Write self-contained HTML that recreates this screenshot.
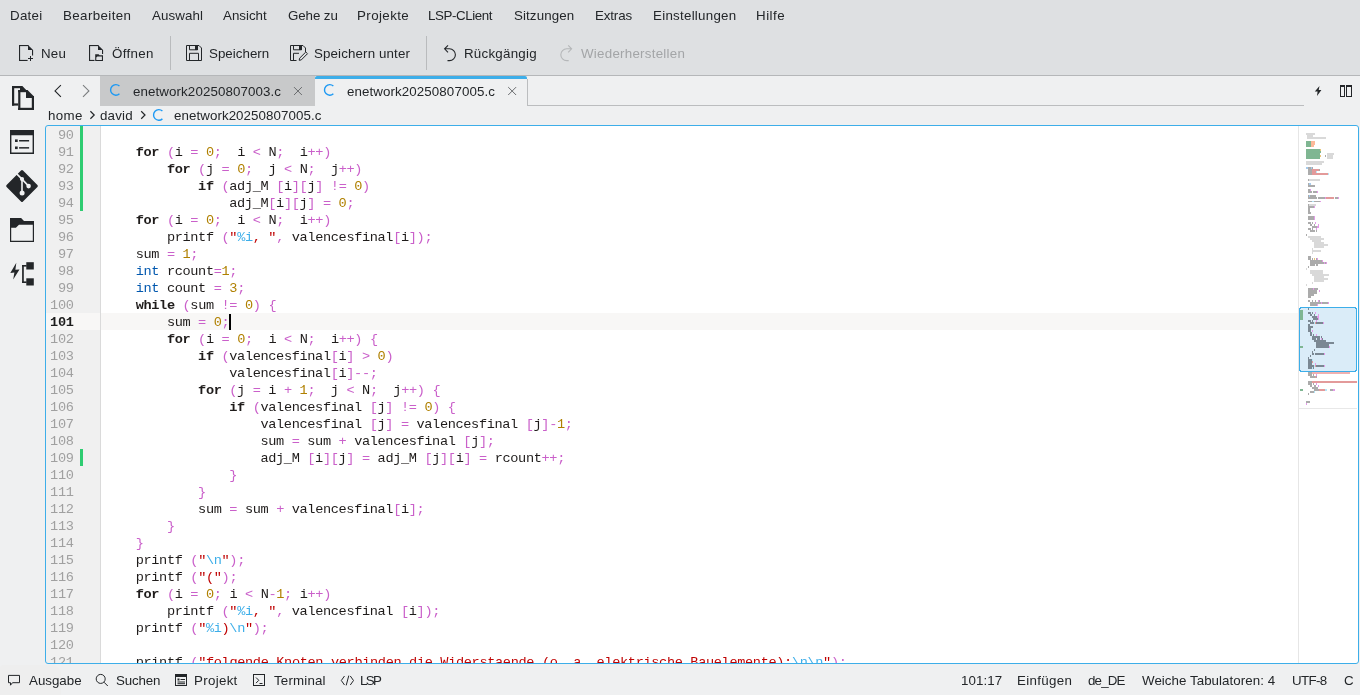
<!DOCTYPE html>
<html><head><meta charset="utf-8"><style>
html,body{margin:0;padding:0}
body{width:1360px;height:695px;overflow:hidden;position:relative;background:#eff0f1;font-family:"Liberation Sans", sans-serif}
.t{position:absolute;white-space:pre;line-height:20px;height:20px;will-change:transform}
.abs{position:absolute}
#hdr{position:absolute;left:0;top:0;width:1360px;height:75px;background:#dee0e2;border-bottom:1px solid #b5b7b9}
#codewrap{position:absolute;left:0;top:0;width:1298px;height:663px;overflow:hidden;will-change:transform}
.cl{position:absolute;left:104.5px;height:17px;line-height:17px;white-space:pre;font-family:"Liberation Mono", monospace;font-size:var(--cfs);letter-spacing:var(--cls);color:#1f1c1b}
.cl b{font-weight:bold}
.gl{position:absolute;left:45.5px;width:28px;text-align:right;height:17px;line-height:17px;font-family:"Liberation Mono", monospace;font-size:var(--cfs);letter-spacing:var(--cls);color:#a0a0a0}
.gl.cur{color:#1e1e1e;font-weight:bold}
:root{--cfs:13.6px;--cls:-0.36px}
</style></head><body>
<div id="hdr"></div>
<div class="abs" style="left:-4px;top:665px;width:65px;height:36px;background:#eeeeee;border-radius:9px"></div>
<div class="abs" style="left:100px;top:76px;width:215px;height:30px;background:#c8c9ca"></div>
<div class="abs" style="left:315px;top:76px;width:212px;height:3px;background:#3daee9;border-top-right-radius:2px;border-top-left-radius:2px"></div>
<div class="abs" style="left:527px;top:79px;width:1px;height:27px;background:#bbbdbf"></div>
<div class="abs" style="left:527px;top:105px;width:777px;height:1px;background:#bbbdbf"></div>
<svg class="abs" style="left:0;top:0" width="1360" height="695" viewBox="0 0 1360 695">
<g fill="#232629" stroke="none">
<!-- toolbar separators -->
<rect x="170" y="36" width="1" height="34" fill="#b9bbbd"/>
<rect x="426" y="36" width="1" height="34" fill="#b9bbbd"/>
<!-- Neu icon -->
<rect x="19" y="45" width="9.5" height="1.1"/>
<rect x="19" y="45" width="1.1" height="16"/>
<rect x="19" y="59.9" width="8.6" height="1.1"/>
<rect x="32" y="50" width="1.1" height="5.5"/>
<polygon points="28,45 33.1,50.1 28,50.1"/>
<rect x="28" y="58" width="5" height="1"/>
<rect x="30" y="56" width="1" height="5"/>
<!-- Öffnen icon -->
<rect x="89" y="45" width="9.5" height="1.1"/>
<rect x="89" y="45" width="1.1" height="16"/>
<rect x="89" y="59.9" width="5.5" height="1.1"/>
<rect x="102" y="50" width="1.1" height="4"/>
<polygon points="98,45 103.1,50.1 98,50.1"/>
<path d="M95.2,54.2 H98.6 L99.6,55.2 H103 V61 H95.2 Z M96.3,57.6 L97.4,56.5 H101.9 V59.9 H96.3 Z" fill-rule="evenodd"/>
<!-- Speichern -->
</g>
<g fill="none" stroke="#232629" stroke-width="1">
<path d="M186.5,45.5 H199 L201.5,48 V60.5 H186.5 Z M189.5,45.5 V49.8 H197.5 V45.5 M189.5,60.5 V53.3 H198.5 V60.5"/>
<path d="M290.5,45.5 H303 L305.5,48 V52 M296.5,60.5 H290.5 V45.5 M293.5,45.5 V49.8 H301.5 V45.5 M293.5,60.5 V53.3 H299"/>
<path d="M299.2,60.3 L299.6,58.2 L305.8,52 L307.5,53.7 L301.3,59.9 Z"/>
</g>
<g fill="#232629">
<rect x="195" y="45.5" width="3" height="4.5"/>
<rect x="299" y="45.5" width="3" height="4.5"/>
</g>
<g fill="none" stroke-linecap="butt">
<!-- undo -->
<path d="M448,45.3 L444.6,48.8 L448,52.3 M444.8,48.8 H449.5 A5.9,5.9 0 0 1 449.5,60.6 H447.5" stroke="#232629" stroke-width="1.1"/>
<!-- redo -->
<path d="M568.2,45.3 L571.6,48.8 L568.2,52.3 M571.4,48.8 H566.7 A5.9,5.9 0 0 0 566.7,60.6 H568.7" stroke="#b5b7b9" stroke-width="1.1"/>
<!-- nav chevrons -->
<path d="M60.9,85.1 L55,90.9 L60.9,96.8" stroke="#232629" stroke-width="1.1"/>
<path d="M83,85.1 L88.9,90.9 L83,96.8" stroke="#7b7d7f" stroke-width="1.1"/>
<!-- C icons -->
<path d="M119.45,85.96 A5.3,5.3 0 1 0 119.45,93.84" stroke="#1d99f3" stroke-width="1.4"/>
<path d="M333.35,85.96 A5.3,5.3 0 1 0 333.35,93.84" stroke="#1d99f3" stroke-width="1.4"/>
<path d="M162.40,111.01 A5.3,5.3 0 1 0 162.40,118.89" stroke="#1d99f3" stroke-width="1.4"/>
<!-- close x -->
<path d="M294,87.1 L301.9,95 M301.9,87.1 L294,95" stroke="#6b6d6f" stroke-width="1"/>
<path d="M508.2,87.1 L516.1,95 M516.1,87.1 L508.2,95" stroke="#6b6d6f" stroke-width="1"/>
<!-- breadcrumb chevrons -->
<path d="M90.4,111.3 L94.2,115 L90.4,118.7" stroke="#232629" stroke-width="1.2"/>
<path d="M141.2,111.3 L145,115 L141.2,118.7" stroke="#232629" stroke-width="1.2"/>
</g>
<g fill="#232629">
<!-- bolt -->
<polygon points="1319.5,86 1314.8,91.6 1317.6,91.6 1317,96 1321.4,90 1318.7,90"/>
<!-- split -->
<path d="M1340,85 H1345 V97 H1340 Z M1341,87 V96 H1344 V87 Z M1346,85 H1352 V97 H1346 Z M1347,87 V96 H1351 V87 Z" fill-rule="evenodd"/>
<!-- sidebar: documents -->
<rect x="12" y="86" width="2.2" height="19.6"/>
<rect x="12" y="86" width="10.3" height="2.2"/>
<rect x="12" y="103.4" width="6.2" height="2.2"/>
<polygon points="20,88.2 22.3,86 26,89.7 26,90 20,90"/>
<rect x="18.2" y="90" width="2.2" height="20"/>
<rect x="18.2" y="90" width="9.3" height="2.2"/>
<rect x="18.2" y="107.8" width="15.8" height="2.2"/>
<rect x="31.8" y="96" width="2.2" height="14"/>
<polygon points="26,90 27.5,90 34,96.5 34,97.9 26,97.9"/>
<!-- sidebar: list window -->
<path d="M10,130 H34 V154 H10 Z M11.4,135.3 V152.6 H32.6 V135.3 Z" fill-rule="evenodd"/>
<rect x="15" y="139.4" width="2.7" height="2.6"/>
<rect x="15" y="146.5" width="2.7" height="2.6"/>
<rect x="19.1" y="140" width="10" height="1.5"/>
<rect x="19.1" y="147.1" width="10" height="1.5"/>
<!-- git -->
<path d="M21,170.6 Q22,169.6 23,170.6 L37.4,185 Q38.4,186 37.4,187 L23,201.4 Q22,202.4 21,201.4 L6.6,187 Q5.6,186 6.6,185 Z"/>
<path d="M15.5,172.6 L22,179.1 V192.9 M22,179.1 L28.6,186.1" stroke="#eff0f1" stroke-width="1.6" fill="none"/>
<circle cx="22" cy="179.1" r="2.1" fill="#eff0f1"/>
<circle cx="28.6" cy="186.1" r="2.3" fill="#eff0f1"/>
<circle cx="22.1" cy="192.9" r="2.5" fill="#eff0f1"/>
<!-- folder -->
<path d="M10,218 H21.1 L24,221 H34 V242 H10 Z M11.2,227.8 V240.8 H32.8 V224.7 H19 L15.9,227.8 Z" fill-rule="evenodd"/>
<!-- lsp sidebar -->
<polygon points="16.3,262.8 10.3,272.9 14.4,272.6 13.2,279.6 19.5,269.4 15.4,269.7"/>
<rect x="22.1" y="265" width="1.7" height="18"/>
<rect x="22.1" y="265" width="4.5" height="1.6"/>
<rect x="22.1" y="281.4" width="4.5" height="1.6"/>
<rect x="26.3" y="262.2" width="7.5" height="7.3"/>
<rect x="26.3" y="278.3" width="7.5" height="7.2"/>
<!-- status: projekt -->
<path d="M175,674 H187 V686 H175 Z M176,677 V685 H186 V677 Z" fill-rule="evenodd"/>
<rect x="177.5" y="678.5" width="2" height="2"/>
<rect x="180.5" y="679" width="4.5" height="1"/>
<rect x="177.5" y="681.5" width="7.5" height="1"/>
<rect x="177.5" y="683.2" width="7.5" height="1"/>
</g>
<g fill="none" stroke="#232629" stroke-width="1">
<!-- speech bubble -->
<path d="M8.5,675.4 H19.5 V682.7 H12.5 L10.5,685.2 V682.7 H8.5 Z"/>
<!-- search -->
<circle cx="100.7" cy="678.9" r="4.5"/>
<path d="M104,682.2 L107.8,686"/>
<!-- terminal -->
<rect x="253.5" y="674.5" width="11" height="11"/>
<path d="M256,677.5 L258.8,680.3 L256,683.1 M259.5,683.5 H262.5"/>
<!-- lsp </> -->
<path d="M344.5,676 L341.3,680.5 L344.5,685 M348.8,675.6 L346.2,685.4 M350.3,676 L353.5,680.5 L350.3,685"/>
</g>
</svg>

<div class="abs" style="left:46px;top:126px;width:1312px;height:537px;background:#fff"></div>
<div class="abs" style="left:46px;top:126px;width:54px;height:537px;background:#f0f0f0"></div>
<div class="abs" style="left:100px;top:126px;width:1px;height:537px;background:#dadada"></div>
<div class="abs" style="left:101px;top:313px;width:1197px;height:17px;background:#f8f7f6"></div>
<div class="abs" style="left:46px;top:313px;width:54px;height:17px;background:#f8f7f6"></div>
<div class="abs" style="left:80px;top:126px;width:3px;height:85px;background:#2ecc71"></div>
<div class="abs" style="left:80px;top:449px;width:3px;height:17px;background:#2ecc71"></div>
<div class="abs" style="left:1298px;top:126px;width:1px;height:537px;background:#e6e6e6"></div>
<div id="codewrap">
<div class="gl" style="top:127px">90</div><div class="gl" style="top:144px">91</div><div class="gl" style="top:161px">92</div><div class="gl" style="top:178px">93</div><div class="gl" style="top:195px">94</div><div class="gl" style="top:212px">95</div><div class="gl" style="top:229px">96</div><div class="gl" style="top:246px">97</div><div class="gl" style="top:263px">98</div><div class="gl" style="top:280px">99</div><div class="gl" style="top:297px">100</div><div class="gl cur" style="top:314px">101</div><div class="gl" style="top:331px">102</div><div class="gl" style="top:348px">103</div><div class="gl" style="top:365px">104</div><div class="gl" style="top:382px">105</div><div class="gl" style="top:399px">106</div><div class="gl" style="top:416px">107</div><div class="gl" style="top:433px">108</div><div class="gl" style="top:450px">109</div><div class="gl" style="top:467px">110</div><div class="gl" style="top:484px">111</div><div class="gl" style="top:501px">112</div><div class="gl" style="top:518px">113</div><div class="gl" style="top:535px">114</div><div class="gl" style="top:552px">115</div><div class="gl" style="top:569px">116</div><div class="gl" style="top:586px">117</div><div class="gl" style="top:603px">118</div><div class="gl" style="top:620px">119</div><div class="gl" style="top:637px">120</div><div class="gl" style="top:654px">121</div>
<div class="cl" style="top:127px"></div><div class="cl" style="top:144px">    <b>for</b> <span style="color:#ca60ca">(</span><span style="color:#1f1c1b">i</span> <span style="color:#ca60ca">=</span> <span style="color:#b08000">0</span><span style="color:#ca60ca">;</span>  <span style="color:#1f1c1b">i</span> <span style="color:#ca60ca">&lt;</span> <span style="color:#1f1c1b">N</span><span style="color:#ca60ca">;</span>  <span style="color:#1f1c1b">i</span><span style="color:#ca60ca">+</span><span style="color:#ca60ca">+</span><span style="color:#ca60ca">)</span></div><div class="cl" style="top:161px">        <b>for</b> <span style="color:#ca60ca">(</span><span style="color:#1f1c1b">j</span> <span style="color:#ca60ca">=</span> <span style="color:#b08000">0</span><span style="color:#ca60ca">;</span>  <span style="color:#1f1c1b">j</span> <span style="color:#ca60ca">&lt;</span> <span style="color:#1f1c1b">N</span><span style="color:#ca60ca">;</span>  <span style="color:#1f1c1b">j</span><span style="color:#ca60ca">+</span><span style="color:#ca60ca">+</span><span style="color:#ca60ca">)</span></div><div class="cl" style="top:178px">            <b>if</b> <span style="color:#ca60ca">(</span><span style="color:#1f1c1b">adj_M</span> <span style="color:#ca60ca">[</span><span style="color:#1f1c1b">i</span><span style="color:#ca60ca">]</span><span style="color:#ca60ca">[</span><span style="color:#1f1c1b">j</span><span style="color:#ca60ca">]</span> <span style="color:#ca60ca">!</span><span style="color:#ca60ca">=</span> <span style="color:#b08000">0</span><span style="color:#ca60ca">)</span></div><div class="cl" style="top:195px">                <span style="color:#1f1c1b">adj_M</span><span style="color:#ca60ca">[</span><span style="color:#1f1c1b">i</span><span style="color:#ca60ca">]</span><span style="color:#ca60ca">[</span><span style="color:#1f1c1b">j</span><span style="color:#ca60ca">]</span> <span style="color:#ca60ca">=</span> <span style="color:#b08000">0</span><span style="color:#ca60ca">;</span></div><div class="cl" style="top:212px">    <b>for</b> <span style="color:#ca60ca">(</span><span style="color:#1f1c1b">i</span> <span style="color:#ca60ca">=</span> <span style="color:#b08000">0</span><span style="color:#ca60ca">;</span>  <span style="color:#1f1c1b">i</span> <span style="color:#ca60ca">&lt;</span> <span style="color:#1f1c1b">N</span><span style="color:#ca60ca">;</span>  <span style="color:#1f1c1b">i</span><span style="color:#ca60ca">+</span><span style="color:#ca60ca">+</span><span style="color:#ca60ca">)</span></div><div class="cl" style="top:229px">        <span style="color:#1f1c1b">printf</span> <span style="color:#ca60ca">(</span><span style="color:#bf0303">&quot;</span><span style="color:#3daee9">%i</span><span style="color:#bf0303">,</span><span style="color:#bf0303"> </span><span style="color:#bf0303">&quot;</span><span style="color:#ca60ca">,</span> <span style="color:#1f1c1b">valencesfinal</span><span style="color:#ca60ca">[</span><span style="color:#1f1c1b">i</span><span style="color:#ca60ca">]</span><span style="color:#ca60ca">)</span><span style="color:#ca60ca">;</span></div><div class="cl" style="top:246px">    <span style="color:#1f1c1b">sum</span> <span style="color:#ca60ca">=</span> <span style="color:#b08000">1</span><span style="color:#ca60ca">;</span></div><div class="cl" style="top:263px">    <span style="color:#0057ae">int</span> <span style="color:#1f1c1b">rcount</span><span style="color:#ca60ca">=</span><span style="color:#b08000">1</span><span style="color:#ca60ca">;</span></div><div class="cl" style="top:280px">    <span style="color:#0057ae">int</span> <span style="color:#1f1c1b">count</span> <span style="color:#ca60ca">=</span> <span style="color:#b08000">3</span><span style="color:#ca60ca">;</span></div><div class="cl" style="top:297px">    <b>while</b> <span style="color:#ca60ca">(</span><span style="color:#1f1c1b">sum</span> <span style="color:#ca60ca">!</span><span style="color:#ca60ca">=</span> <span style="color:#b08000">0</span><span style="color:#ca60ca">)</span> <span style="color:#ca60ca">{</span></div><div class="cl cur" style="top:314px">        <span style="color:#1f1c1b">sum</span> <span style="color:#ca60ca">=</span> <span style="color:#b08000">0</span><span style="color:#ca60ca">;</span></div><div class="cl" style="top:331px">        <b>for</b> <span style="color:#ca60ca">(</span><span style="color:#1f1c1b">i</span> <span style="color:#ca60ca">=</span> <span style="color:#b08000">0</span><span style="color:#ca60ca">;</span>  <span style="color:#1f1c1b">i</span> <span style="color:#ca60ca">&lt;</span> <span style="color:#1f1c1b">N</span><span style="color:#ca60ca">;</span>  <span style="color:#1f1c1b">i</span><span style="color:#ca60ca">+</span><span style="color:#ca60ca">+</span><span style="color:#ca60ca">)</span> <span style="color:#ca60ca">{</span></div><div class="cl" style="top:348px">            <b>if</b> <span style="color:#ca60ca">(</span><span style="color:#1f1c1b">valencesfinal</span><span style="color:#ca60ca">[</span><span style="color:#1f1c1b">i</span><span style="color:#ca60ca">]</span> <span style="color:#ca60ca">&gt;</span> <span style="color:#b08000">0</span><span style="color:#ca60ca">)</span></div><div class="cl" style="top:365px">                <span style="color:#1f1c1b">valencesfinal</span><span style="color:#ca60ca">[</span><span style="color:#1f1c1b">i</span><span style="color:#ca60ca">]</span><span style="color:#ca60ca">-</span><span style="color:#ca60ca">-</span><span style="color:#ca60ca">;</span></div><div class="cl" style="top:382px">            <b>for</b> <span style="color:#ca60ca">(</span><span style="color:#1f1c1b">j</span> <span style="color:#ca60ca">=</span> <span style="color:#1f1c1b">i</span> <span style="color:#ca60ca">+</span> <span style="color:#b08000">1</span><span style="color:#ca60ca">;</span>  <span style="color:#1f1c1b">j</span> <span style="color:#ca60ca">&lt;</span> <span style="color:#1f1c1b">N</span><span style="color:#ca60ca">;</span>  <span style="color:#1f1c1b">j</span><span style="color:#ca60ca">+</span><span style="color:#ca60ca">+</span><span style="color:#ca60ca">)</span> <span style="color:#ca60ca">{</span></div><div class="cl" style="top:399px">                <b>if</b> <span style="color:#ca60ca">(</span><span style="color:#1f1c1b">valencesfinal</span> <span style="color:#ca60ca">[</span><span style="color:#1f1c1b">j</span><span style="color:#ca60ca">]</span> <span style="color:#ca60ca">!</span><span style="color:#ca60ca">=</span> <span style="color:#b08000">0</span><span style="color:#ca60ca">)</span> <span style="color:#ca60ca">{</span></div><div class="cl" style="top:416px">                    <span style="color:#1f1c1b">valencesfinal</span> <span style="color:#ca60ca">[</span><span style="color:#1f1c1b">j</span><span style="color:#ca60ca">]</span> <span style="color:#ca60ca">=</span> <span style="color:#1f1c1b">valencesfinal</span> <span style="color:#ca60ca">[</span><span style="color:#1f1c1b">j</span><span style="color:#ca60ca">]</span><span style="color:#ca60ca">-</span><span style="color:#b08000">1</span><span style="color:#ca60ca">;</span></div><div class="cl" style="top:433px">                    <span style="color:#1f1c1b">sum</span> <span style="color:#ca60ca">=</span> <span style="color:#1f1c1b">sum</span> <span style="color:#ca60ca">+</span> <span style="color:#1f1c1b">valencesfinal</span> <span style="color:#ca60ca">[</span><span style="color:#1f1c1b">j</span><span style="color:#ca60ca">]</span><span style="color:#ca60ca">;</span></div><div class="cl" style="top:450px">                    <span style="color:#1f1c1b">adj_M</span> <span style="color:#ca60ca">[</span><span style="color:#1f1c1b">i</span><span style="color:#ca60ca">]</span><span style="color:#ca60ca">[</span><span style="color:#1f1c1b">j</span><span style="color:#ca60ca">]</span> <span style="color:#ca60ca">=</span> <span style="color:#1f1c1b">adj_M</span> <span style="color:#ca60ca">[</span><span style="color:#1f1c1b">j</span><span style="color:#ca60ca">]</span><span style="color:#ca60ca">[</span><span style="color:#1f1c1b">i</span><span style="color:#ca60ca">]</span> <span style="color:#ca60ca">=</span> <span style="color:#1f1c1b">rcount</span><span style="color:#ca60ca">+</span><span style="color:#ca60ca">+</span><span style="color:#ca60ca">;</span></div><div class="cl" style="top:467px">                <span style="color:#ca60ca">}</span></div><div class="cl" style="top:484px">            <span style="color:#ca60ca">}</span></div><div class="cl" style="top:501px">            <span style="color:#1f1c1b">sum</span> <span style="color:#ca60ca">=</span> <span style="color:#1f1c1b">sum</span> <span style="color:#ca60ca">+</span> <span style="color:#1f1c1b">valencesfinal</span><span style="color:#ca60ca">[</span><span style="color:#1f1c1b">i</span><span style="color:#ca60ca">]</span><span style="color:#ca60ca">;</span></div><div class="cl" style="top:518px">        <span style="color:#ca60ca">}</span></div><div class="cl" style="top:535px">    <span style="color:#ca60ca">}</span></div><div class="cl" style="top:552px">    <span style="color:#1f1c1b">printf</span> <span style="color:#ca60ca">(</span><span style="color:#bf0303">&quot;</span><span style="color:#3daee9">\n</span><span style="color:#bf0303">&quot;</span><span style="color:#ca60ca">)</span><span style="color:#ca60ca">;</span></div><div class="cl" style="top:569px">    <span style="color:#1f1c1b">printf</span> <span style="color:#ca60ca">(</span><span style="color:#bf0303">&quot;</span><span style="color:#bf0303">(</span><span style="color:#bf0303">&quot;</span><span style="color:#ca60ca">)</span><span style="color:#ca60ca">;</span></div><div class="cl" style="top:586px">    <b>for</b> <span style="color:#ca60ca">(</span><span style="color:#1f1c1b">i</span> <span style="color:#ca60ca">=</span> <span style="color:#b08000">0</span><span style="color:#ca60ca">;</span> <span style="color:#1f1c1b">i</span> <span style="color:#ca60ca">&lt;</span> <span style="color:#1f1c1b">N</span><span style="color:#ca60ca">-</span><span style="color:#b08000">1</span><span style="color:#ca60ca">;</span> <span style="color:#1f1c1b">i</span><span style="color:#ca60ca">+</span><span style="color:#ca60ca">+</span><span style="color:#ca60ca">)</span></div><div class="cl" style="top:603px">        <span style="color:#1f1c1b">printf</span> <span style="color:#ca60ca">(</span><span style="color:#bf0303">&quot;</span><span style="color:#3daee9">%i</span><span style="color:#bf0303">,</span><span style="color:#bf0303"> </span><span style="color:#bf0303">&quot;</span><span style="color:#ca60ca">,</span> <span style="color:#1f1c1b">valencesfinal</span> <span style="color:#ca60ca">[</span><span style="color:#1f1c1b">i</span><span style="color:#ca60ca">]</span><span style="color:#ca60ca">)</span><span style="color:#ca60ca">;</span></div><div class="cl" style="top:620px">    <span style="color:#1f1c1b">printf</span> <span style="color:#ca60ca">(</span><span style="color:#bf0303">&quot;</span><span style="color:#3daee9">%i</span><span style="color:#bf0303">)</span><span style="color:#3daee9">\n</span><span style="color:#bf0303">&quot;</span><span style="color:#ca60ca">)</span><span style="color:#ca60ca">;</span></div><div class="cl" style="top:637px"></div><div class="cl" style="top:654px">    <span style="color:#1f1c1b">printf</span> <span style="color:#ca60ca">(</span><span style="color:#bf0303">&quot;</span><span style="color:#bf0303">f</span><span style="color:#bf0303">o</span><span style="color:#bf0303">l</span><span style="color:#bf0303">g</span><span style="color:#bf0303">e</span><span style="color:#bf0303">n</span><span style="color:#bf0303">d</span><span style="color:#bf0303">e</span><span style="color:#bf0303"> </span><span style="color:#bf0303">K</span><span style="color:#bf0303">n</span><span style="color:#bf0303">o</span><span style="color:#bf0303">t</span><span style="color:#bf0303">e</span><span style="color:#bf0303">n</span><span style="color:#bf0303"> </span><span style="color:#bf0303">v</span><span style="color:#bf0303">e</span><span style="color:#bf0303">r</span><span style="color:#bf0303">b</span><span style="color:#bf0303">i</span><span style="color:#bf0303">n</span><span style="color:#bf0303">d</span><span style="color:#bf0303">e</span><span style="color:#bf0303">n</span><span style="color:#bf0303"> </span><span style="color:#bf0303">d</span><span style="color:#bf0303">i</span><span style="color:#bf0303">e</span><span style="color:#bf0303"> </span><span style="color:#bf0303">W</span><span style="color:#bf0303">i</span><span style="color:#bf0303">d</span><span style="color:#bf0303">e</span><span style="color:#bf0303">r</span><span style="color:#bf0303">s</span><span style="color:#bf0303">t</span><span style="color:#bf0303">a</span><span style="color:#bf0303">e</span><span style="color:#bf0303">n</span><span style="color:#bf0303">d</span><span style="color:#bf0303">e</span><span style="color:#bf0303"> </span><span style="color:#bf0303">(</span><span style="color:#bf0303">o</span><span style="color:#bf0303">.</span><span style="color:#bf0303"> </span><span style="color:#bf0303">a</span><span style="color:#bf0303">.</span><span style="color:#bf0303"> </span><span style="color:#bf0303">e</span><span style="color:#bf0303">l</span><span style="color:#bf0303">e</span><span style="color:#bf0303">k</span><span style="color:#bf0303">t</span><span style="color:#bf0303">r</span><span style="color:#bf0303">i</span><span style="color:#bf0303">s</span><span style="color:#bf0303">c</span><span style="color:#bf0303">h</span><span style="color:#bf0303">e</span><span style="color:#bf0303"> </span><span style="color:#bf0303">B</span><span style="color:#bf0303">a</span><span style="color:#bf0303">u</span><span style="color:#bf0303">e</span><span style="color:#bf0303">l</span><span style="color:#bf0303">e</span><span style="color:#bf0303">m</span><span style="color:#bf0303">e</span><span style="color:#bf0303">n</span><span style="color:#bf0303">t</span><span style="color:#bf0303">e</span><span style="color:#bf0303">)</span><span style="color:#bf0303">:</span><span style="color:#3daee9">\n</span><span style="color:#3daee9">\n</span><span style="color:#bf0303">&quot;</span><span style="color:#ca60ca">)</span><span style="color:#ca60ca">;</span></div>
</div>
<div class="abs" style="left:229px;top:314px;width:2px;height:16px;background:#000"></div>
<div class="abs" style="left:1299px;top:408px;width:58px;height:1px;background:#e8e8e8"></div>
<svg class="abs" style="left:0;top:0" width="1360" height="695" shape-rendering="crispEdges">
<rect x="1306" y="133" width="9" height="2" fill="#d9d9d9"/>
<rect x="1307" y="135" width="6" height="2" fill="#d9d9d9"/>
<rect x="1307" y="137" width="19" height="2" fill="#d9d9d9"/>
<rect x="1306" y="141" width="5" height="6" fill="#7fb692"/>
<rect x="1311" y="141" width="4" height="4" fill="#fdb99a"/>
<rect x="1311" y="145" width="3" height="2" fill="#fdb99a"/>
<rect x="1306" y="149" width="14" height="10" fill="#7fb692"/>
<rect x="1320" y="149" width="1" height="2" fill="#e8c478"/>
<rect x="1320" y="151" width="1" height="2" fill="#7fb692"/>
<rect x="1320" y="155" width="1" height="2" fill="#e8c478"/>
<rect x="1325" y="155" width="1" height="2" fill="#ababab"/>
<rect x="1327" y="153" width="7" height="2" fill="#d9d9d9"/>
<rect x="1327" y="155" width="6" height="4" fill="#d9d9d9"/>
<rect x="1306" y="161" width="18" height="2" fill="#d9d9d9"/>
<rect x="1306" y="163" width="16" height="2" fill="#d9d9d9"/>
<rect x="1306" y="167" width="2" height="2" fill="#a6cbec"/>
<rect x="1308" y="167" width="3" height="2" fill="#ababab"/>
<rect x="1311" y="167" width="1" height="2" fill="#a6cbec"/>
<rect x="1312" y="167" width="1" height="2" fill="#ababab"/>
<rect x="1308" y="169" width="4" height="6" fill="#ababab"/>
<rect x="1312" y="169" width="7" height="2" fill="#e39a9a"/>
<rect x="1319" y="169" width="1" height="2" fill="#ababab"/>
<rect x="1312" y="171" width="4" height="2" fill="#e39a9a"/>
<rect x="1316" y="171" width="1" height="2" fill="#b5e6f8"/>
<rect x="1312" y="173" width="16" height="2" fill="#e39a9a"/>
<rect x="1328" y="173" width="1" height="2" fill="#b5e6f8"/>
<rect x="1308" y="179" width="1" height="2" fill="#ababab"/>
<rect x="1309" y="179" width="11" height="2" fill="#d9d9d9"/>
<rect x="1308" y="183" width="1" height="2" fill="#ababab"/>
<rect x="1309" y="183" width="2" height="2" fill="#a6cbec"/>
<rect x="1308" y="185" width="7" height="2" fill="#ababab"/>
<rect x="1308" y="189" width="2" height="2" fill="#ababab"/>
<rect x="1310" y="189" width="1" height="2" fill="#e49ae8"/>
<rect x="1308" y="191" width="4" height="2" fill="#ababab"/>
<rect x="1313" y="191" width="4" height="2" fill="#ababab"/>
<rect x="1317" y="191" width="1" height="2" fill="#e49ae8"/>
<rect x="1308" y="195" width="1" height="2" fill="#ababab"/>
<rect x="1309" y="195" width="1" height="2" fill="#a6cbec"/>
<rect x="1310" y="195" width="6" height="2" fill="#ababab"/>
<rect x="1308" y="197" width="9" height="2" fill="#ababab"/>
<rect x="1318" y="197" width="7" height="2" fill="#ababab"/>
<rect x="1325" y="197" width="1" height="2" fill="#e49ae8"/>
<rect x="1326" y="197" width="8" height="2" fill="#e39a9a"/>
<rect x="1335" y="197" width="3" height="2" fill="#ababab"/>
<rect x="1338" y="197" width="1" height="2" fill="#e49ae8"/>
<rect x="1308" y="201" width="4" height="1" fill="#ababab"/>
<rect x="1312" y="201" width="2" height="1" fill="#b5e6f8"/>
<rect x="1314" y="201" width="6" height="1" fill="#ababab"/>
<rect x="1320" y="201" width="1" height="1" fill="#e49ae8"/>
<rect x="1308" y="204" width="1" height="2" fill="#ababab"/>
<rect x="1309" y="204" width="7" height="2" fill="#d9d9d9"/>
<rect x="1308" y="206" width="6" height="2" fill="#ababab"/>
<rect x="1314" y="206" width="1" height="2" fill="#e49ae8"/>
<rect x="1308" y="208" width="2" height="4" fill="#ababab"/>
<rect x="1308" y="212" width="3" height="2" fill="#ababab"/>
<rect x="1308" y="216" width="6" height="4" fill="#ababab"/>
<rect x="1314" y="216" width="1" height="4" fill="#e49ae8"/>
<rect x="1308" y="222" width="3" height="2" fill="#ababab"/>
<rect x="1312" y="222" width="1" height="2" fill="#ababab"/>
<rect x="1315" y="222" width="1" height="2" fill="#e49ae8"/>
<rect x="1310" y="224" width="2" height="2" fill="#ababab"/>
<rect x="1314" y="224" width="1" height="2" fill="#ababab"/>
<rect x="1318" y="224" width="1" height="2" fill="#e49ae8"/>
<rect x="1312" y="226" width="5" height="2" fill="#ababab"/>
<rect x="1317" y="226" width="2" height="2" fill="#e49ae8"/>
<rect x="1308" y="228" width="3" height="2" fill="#ababab"/>
<rect x="1312" y="228" width="1" height="2" fill="#ababab"/>
<rect x="1316" y="228" width="1" height="2" fill="#e49ae8"/>
<rect x="1310" y="230" width="5" height="2" fill="#ababab"/>
<rect x="1316" y="230" width="1" height="2" fill="#ababab"/>
<rect x="1306" y="234" width="1" height="2" fill="#ababab"/>
<rect x="1308" y="236" width="13" height="2" fill="#d9d9d9"/>
<rect x="1310" y="238" width="14" height="2" fill="#d9d9d9"/>
<rect x="1312" y="240" width="9" height="2" fill="#d9d9d9"/>
<rect x="1314" y="242" width="10" height="6" fill="#d9d9d9"/>
<rect x="1324" y="244" width="4" height="2" fill="#d9d9d9"/>
<rect x="1312" y="248" width="1" height="6" fill="#d9d9d9"/>
<rect x="1313" y="250" width="8" height="2" fill="#d9d9d9"/>
<rect x="1308" y="256" width="3" height="4" fill="#ababab"/>
<rect x="1312" y="258" width="1" height="2" fill="#ababab"/>
<rect x="1314" y="258" width="1" height="2" fill="#e8c478"/>
<rect x="1316" y="258" width="1" height="2" fill="#ababab"/>
<rect x="1317" y="258" width="1" height="2" fill="#e49ae8"/>
<rect x="1310" y="260" width="12" height="2" fill="#ababab"/>
<rect x="1322" y="260" width="1" height="2" fill="#e49ae8"/>
<rect x="1310" y="262" width="14" height="2" fill="#ababab"/>
<rect x="1324" y="262" width="1" height="2" fill="#e49ae8"/>
<rect x="1325" y="262" width="1" height="2" fill="#ababab"/>
<rect x="1326" y="262" width="1" height="2" fill="#e49ae8"/>
<rect x="1310" y="264" width="5" height="2" fill="#ababab"/>
<rect x="1316" y="264" width="2" height="2" fill="#ababab"/>
<rect x="1308" y="266" width="1" height="2" fill="#ababab"/>
<rect x="1306" y="268" width="1" height="2" fill="#d9d9d9"/>
<rect x="1310" y="270" width="13" height="4" fill="#d9d9d9"/>
<rect x="1312" y="274" width="17" height="2" fill="#d9d9d9"/>
<rect x="1314" y="276" width="10" height="2" fill="#d9d9d9"/>
<rect x="1314" y="278" width="14" height="2" fill="#d9d9d9"/>
<rect x="1314" y="280" width="10" height="2" fill="#d9d9d9"/>
<rect x="1312" y="282" width="1" height="2" fill="#d9d9d9"/>
<rect x="1306" y="284" width="1" height="2" fill="#d9d9d9"/>
<rect x="1308" y="288" width="10" height="2" fill="#ababab"/>
<rect x="1313" y="288" width="1" height="2" fill="#e49ae8"/>
<rect x="1308" y="290" width="9" height="4" fill="#ababab"/>
<rect x="1319" y="290" width="1" height="2" fill="#e49ae8"/>
<rect x="1308" y="294" width="6" height="2" fill="#ababab"/>
<rect x="1308" y="296" width="3" height="2" fill="#ababab"/>
<rect x="1308" y="300" width="2" height="2" fill="#ababab"/>
<rect x="1312" y="300" width="1" height="2" fill="#ababab"/>
<rect x="1315" y="300" width="1" height="2" fill="#ababab"/>
<rect x="1318" y="300" width="1" height="2" fill="#e49ae8"/>
<rect x="1319" y="300" width="1" height="2" fill="#ababab"/>
<rect x="1310" y="302" width="11" height="2" fill="#ababab"/>
<rect x="1321" y="302" width="1" height="2" fill="#e49ae8"/>
<rect x="1322" y="302" width="6" height="2" fill="#ababab"/>
<rect x="1328" y="302" width="1" height="2" fill="#e49ae8"/>
<rect x="1310" y="304" width="7" height="2" fill="#ababab"/>
<rect x="1317" y="304" width="1" height="2" fill="#e49ae8"/>
<rect x="1299.5" y="307.5" width="57" height="64" rx="2.5" fill="#daecf8" stroke="#3daee9" stroke-width="1.2"/>
<rect x="1300" y="310" width="3" height="10" fill="#7fb692"/>
<rect x="1308" y="308" width="1" height="2" fill="#7b8893"/>
<rect x="1308" y="312" width="3" height="2" fill="#7b8893"/>
<rect x="1312" y="312" width="1" height="2" fill="#7b8893"/>
<rect x="1315" y="312" width="1" height="2" fill="#e49ae8"/>
<rect x="1310" y="314" width="2" height="2" fill="#7b8893"/>
<rect x="1314" y="314" width="1" height="2" fill="#7b8893"/>
<rect x="1318" y="314" width="1" height="2" fill="#e49ae8"/>
<rect x="1312" y="316" width="6" height="2" fill="#7b8893"/>
<rect x="1317" y="316" width="2" height="2" fill="#e49ae8"/>
<rect x="1313" y="318" width="5" height="2" fill="#7b8893"/>
<rect x="1318" y="318" width="1" height="2" fill="#e49ae8"/>
<rect x="1308" y="320" width="3" height="2" fill="#7b8893"/>
<rect x="1312" y="320" width="1" height="2" fill="#7b8893"/>
<rect x="1316" y="320" width="1" height="2" fill="#e49ae8"/>
<rect x="1310" y="322" width="4" height="2" fill="#7b8893"/>
<rect x="1314" y="322" width="1" height="2" fill="#b5e6f8"/>
<rect x="1315" y="322" width="1" height="2" fill="#e39a9a"/>
<rect x="1316" y="322" width="7" height="2" fill="#7b8893"/>
<rect x="1323" y="322" width="1" height="2" fill="#e49ae8"/>
<rect x="1308" y="324" width="2" height="2" fill="#7b8893"/>
<rect x="1308" y="326" width="5" height="2" fill="#7b8893"/>
<rect x="1308" y="328" width="3" height="4" fill="#7b8893"/>
<rect x="1312" y="330" width="1" height="2" fill="#e49ae8"/>
<rect x="1310" y="332" width="2" height="4" fill="#7b8893"/>
<rect x="1313" y="334" width="1" height="2" fill="#7b8893"/>
<rect x="1316" y="334" width="1" height="2" fill="#e49ae8"/>
<rect x="1312" y="336" width="8" height="2" fill="#7b8893"/>
<rect x="1321" y="336" width="1" height="2" fill="#7b8893"/>
<rect x="1312" y="338" width="4" height="2" fill="#7b8893"/>
<rect x="1317" y="338" width="3" height="2" fill="#7b8893"/>
<rect x="1321" y="338" width="1" height="2" fill="#e49ae8"/>
<rect x="1322" y="338" width="1" height="2" fill="#7b8893"/>
<rect x="1314" y="340" width="12" height="2" fill="#7b8893"/>
<rect x="1316" y="342" width="18" height="2" fill="#7b8893"/>
<rect x="1316" y="344" width="13" height="4" fill="#7b8893"/>
<rect x="1329" y="346" width="1" height="2" fill="#e49ae8"/>
<rect x="1300" y="346" width="3" height="2" fill="#7fb692"/>
<rect x="1314" y="349" width="1" height="2" fill="#7b8893"/>
<rect x="1312" y="351" width="1" height="2" fill="#7b8893"/>
<rect x="1312" y="353" width="2" height="2" fill="#7b8893"/>
<rect x="1315" y="353" width="9" height="2" fill="#7b8893"/>
<rect x="1324" y="353" width="1" height="2" fill="#e49ae8"/>
<rect x="1310" y="355" width="1" height="2" fill="#7b8893"/>
<rect x="1308" y="357" width="1" height="2" fill="#7b8893"/>
<rect x="1308" y="359" width="4" height="8" fill="#7b8893"/>
<rect x="1312" y="359" width="1" height="2" fill="#b5e6f8"/>
<rect x="1312" y="361" width="1" height="2" fill="#e39a9a"/>
<rect x="1315" y="363" width="1" height="2" fill="#e49ae8"/>
<rect x="1310" y="365" width="4" height="2" fill="#7b8893"/>
<rect x="1314" y="365" width="1" height="2" fill="#b5e6f8"/>
<rect x="1315" y="365" width="1" height="2" fill="#e39a9a"/>
<rect x="1316" y="365" width="8" height="2" fill="#7b8893"/>
<rect x="1324" y="365" width="1" height="2" fill="#e49ae8"/>
<rect x="1308" y="367" width="6" height="2" fill="#7b8893"/>
<rect x="1312" y="367" width="1" height="2" fill="#b5e6f8"/>
<rect x="1308" y="372" width="4" height="4" fill="#ababab"/>
<rect x="1312" y="372" width="38" height="2" fill="#efb0b0"/>
<rect x="1313" y="374" width="1" height="2" fill="#ababab"/>
<rect x="1316" y="374" width="1" height="2" fill="#e49ae8"/>
<rect x="1310" y="376" width="5" height="2" fill="#ababab"/>
<rect x="1315" y="376" width="1" height="2" fill="#e39a9a"/>
<rect x="1316" y="376" width="1" height="2" fill="#ababab"/>
<rect x="1308" y="381" width="4" height="4" fill="#ababab"/>
<rect x="1312" y="381" width="45" height="2" fill="#e39a9a"/>
<rect x="1313" y="383" width="1" height="2" fill="#ababab"/>
<rect x="1316" y="383" width="1" height="2" fill="#e49ae8"/>
<rect x="1310" y="385" width="2" height="2" fill="#ababab"/>
<rect x="1314" y="385" width="2" height="2" fill="#ababab"/>
<rect x="1318" y="385" width="1" height="2" fill="#e49ae8"/>
<rect x="1312" y="387" width="6" height="2" fill="#ababab"/>
<rect x="1300" y="389" width="3" height="2" fill="#7fb692"/>
<rect x="1314" y="389" width="5" height="2" fill="#ababab"/>
<rect x="1319" y="389" width="6" height="2" fill="#e39a9a"/>
<rect x="1325" y="389" width="2" height="2" fill="#b5e6f8"/>
<rect x="1330" y="389" width="3" height="2" fill="#ababab"/>
<rect x="1333" y="389" width="2" height="2" fill="#e49ae8"/>
<rect x="1310" y="391" width="4" height="2" fill="#ababab"/>
<rect x="1314" y="391" width="1" height="2" fill="#b5e6f8"/>
<rect x="1308" y="393" width="1" height="2" fill="#ababab"/>
<rect x="1306" y="401" width="4" height="2" fill="#ababab"/>
<rect x="1306" y="403" width="1" height="2" fill="#e49ae8"/>
</svg>
<div class="abs" style="left:45px;top:125px;width:1312px;height:537px;border:1px solid #3daee9;border-radius:3px"></div>
<div class="t" style="left:9.60px;top:5.98px;font-size:13.33px;letter-spacing:0.287px;color:#232629">Datei</div><div class="t" style="left:62.50px;top:5.98px;font-size:13.33px;letter-spacing:0.394px;color:#232629">Bearbeiten</div><div class="t" style="left:151.50px;top:5.98px;font-size:13.33px;letter-spacing:0.081px;color:#232629">Auswahl</div><div class="t" style="left:223.00px;top:5.98px;font-size:13.33px;letter-spacing:-0.001px;color:#232629">Ansicht</div><div class="t" style="left:288.20px;top:5.98px;font-size:13.33px;letter-spacing:-0.095px;color:#232629">Gehe zu</div><div class="t" style="left:357.20px;top:5.98px;font-size:13.33px;letter-spacing:0.403px;color:#232629">Projekte</div><div class="t" style="left:428.40px;top:5.98px;font-size:13.33px;letter-spacing:-0.406px;color:#232629">LSP-CLient</div><div class="t" style="left:514.40px;top:5.98px;font-size:13.33px;letter-spacing:0.104px;color:#232629">Sitzungen</div><div class="t" style="left:594.60px;top:5.98px;font-size:13.33px;letter-spacing:-0.142px;color:#232629">Extras</div><div class="t" style="left:652.50px;top:5.98px;font-size:13.33px;letter-spacing:0.265px;color:#232629">Einstellungen</div><div class="t" style="left:756.00px;top:5.98px;font-size:13.33px;letter-spacing:0.512px;color:#232629">Hilfe</div><div class="t" style="left:40.70px;top:43.58px;font-size:13.33px;letter-spacing:0.231px;color:#232629">Neu</div><div class="t" style="left:111.60px;top:43.58px;font-size:13.33px;letter-spacing:0.329px;color:#232629">Öffnen</div><div class="t" style="left:209.20px;top:43.58px;font-size:13.33px;letter-spacing:0.025px;color:#232629">Speichern</div><div class="t" style="left:314.40px;top:43.58px;font-size:13.33px;letter-spacing:0.131px;color:#232629">Speichern unter</div><div class="t" style="left:464.00px;top:43.58px;font-size:13.33px;letter-spacing:0.247px;color:#232629">Rückgängig</div><div class="t" style="left:581.10px;top:43.58px;font-size:13.33px;letter-spacing:0.254px;color:#a3a5a7">Wiederherstellen</div><div class="t" style="left:132.60px;top:81.68px;font-size:13.33px;letter-spacing:0.099px;color:#232629">enetwork20250807003.c</div><div class="t" style="left:346.80px;top:81.68px;font-size:13.33px;letter-spacing:0.094px;color:#232629">enetwork20250807005.c</div><div class="t" style="left:47.80px;top:105.88px;font-size:13.33px;letter-spacing:0.358px;color:#232629">home</div><div class="t" style="left:100.30px;top:105.88px;font-size:13.33px;letter-spacing:0.212px;color:#232629">david</div><div class="t" style="left:173.80px;top:105.88px;font-size:13.33px;letter-spacing:0.069px;color:#232629">enetwork20250807005.c</div><div class="t" style="left:28.70px;top:670.58px;font-size:13.33px;letter-spacing:-0.001px;color:#232629">Ausgabe</div><div class="t" style="left:116.20px;top:670.58px;font-size:13.33px;letter-spacing:-0.138px;color:#232629">Suchen</div><div class="t" style="left:194.40px;top:670.58px;font-size:13.33px;letter-spacing:0.304px;color:#232629">Projekt</div><div class="t" style="left:274.00px;top:670.58px;font-size:13.33px;letter-spacing:0.171px;color:#232629">Terminal</div><div class="t" style="left:360.10px;top:670.58px;font-size:13.33px;letter-spacing:-1.601px;color:#232629">LSP</div><div class="t" style="left:960.50px;top:670.58px;font-size:13.33px;letter-spacing:0.089px;color:#232629">101:17</div><div class="t" style="left:1016.80px;top:670.58px;font-size:13.33px;letter-spacing:0.314px;color:#232629">Einfügen</div><div class="t" style="left:1088.00px;top:670.58px;font-size:13.33px;letter-spacing:-0.841px;color:#232629">de_DE</div><div class="t" style="left:1142.30px;top:670.58px;font-size:13.33px;letter-spacing:0.047px;color:#232629">Weiche Tabulatoren: 4</div><div class="t" style="left:1292.00px;top:670.58px;font-size:13.33px;letter-spacing:-0.637px;color:#232629">UTF-8</div><div class="t" style="left:1344.30px;top:670.58px;font-size:13.33px;letter-spacing:0.000px;color:#232629">C</div>
</body></html>
